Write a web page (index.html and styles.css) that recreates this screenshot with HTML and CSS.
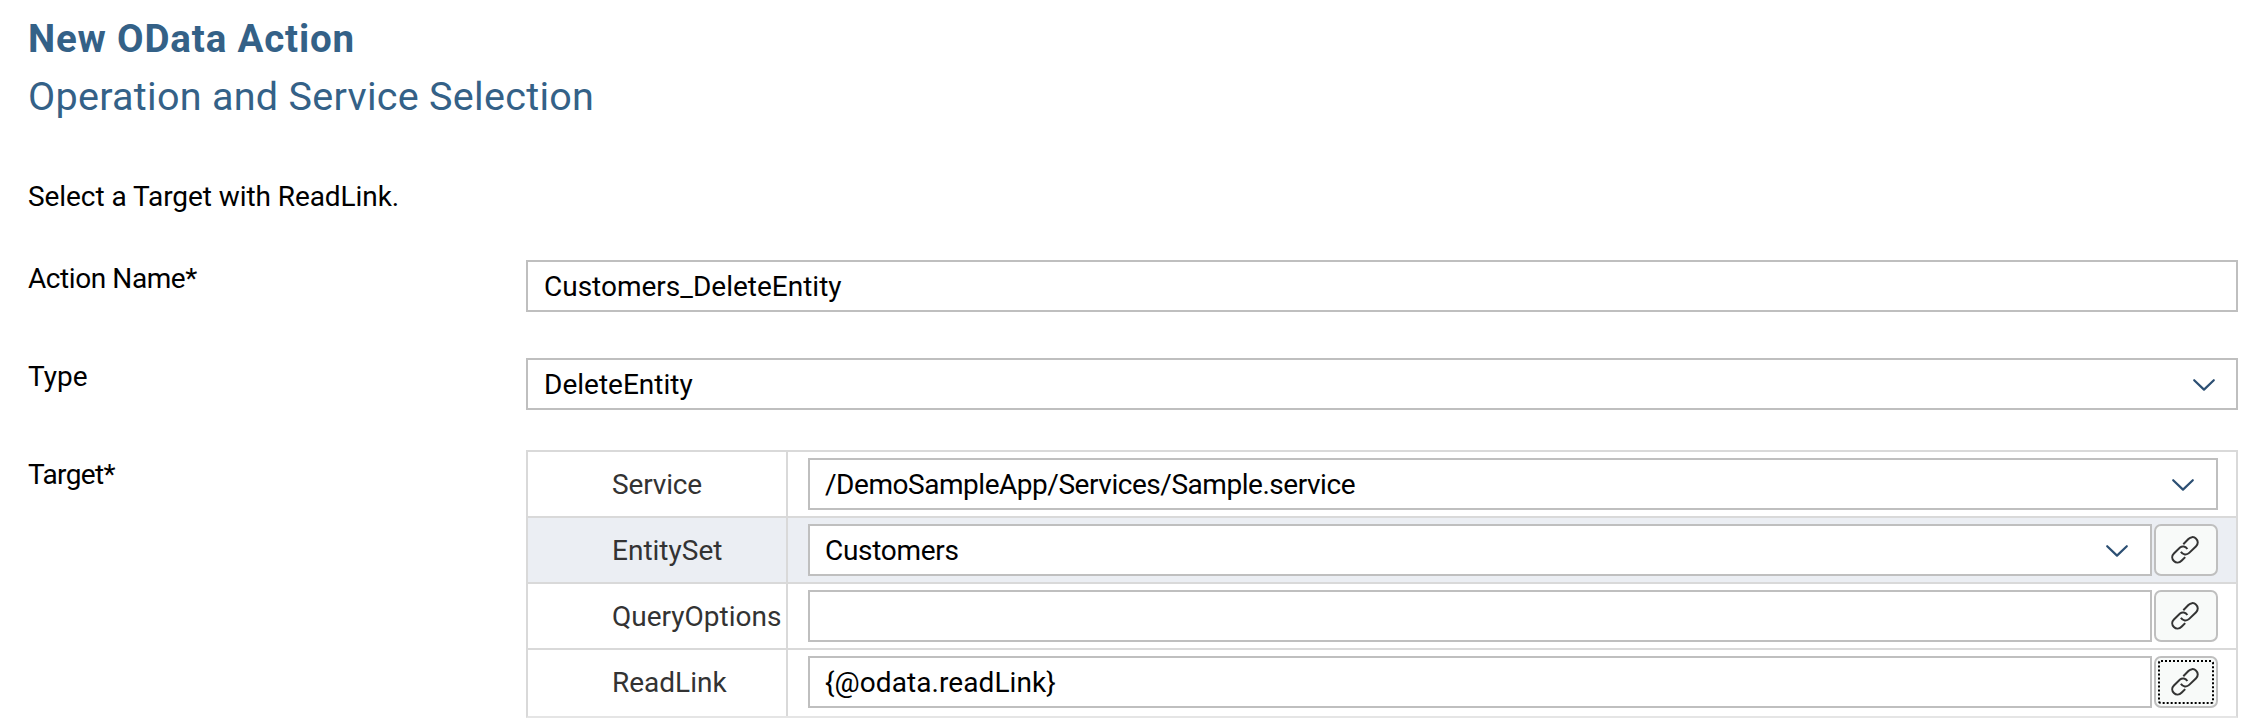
FILE: index.html
```html
<!DOCTYPE html>
<html lang="en">
<head>
<meta charset="utf-8">
<title>New OData Action</title>
<link rel="stylesheet" href="styles.css">
</head>
<body>
<svg width="0" height="0" class="defs">
  <symbol id="chevron" viewBox="0 0 24 14"><path d="M2.2 2.2 12 11.6 21.8 2.2"/></symbol>
  <symbol id="link" viewBox="0 0 28 28"><path d="M12.3 8.2 17.4 3C19.4 .9 22.7 .3 24.9 2.5C27.3 4.700 27.300 8 25.100 10.200L18.200 16.900C15.700 19.300 11.700 18.900 9.900 15.700M14.200 21.100 10.500 24.800C8.300 27 5.200 27.300 2.900 25C.600 22.700 .700 19.700 2.900 17.500L9 11.500C11.300 9.800 14.600 10.300 16.400 13"/></symbol>
</svg>
<main class="page">
  <h1 class="title">New OData Action</h1>
  <h2 class="subtitle">Operation and Service Selection</h2>
  <p class="hint">Select a Target with ReadLink.</p>
  <div class="row">
    <label class="label action">Action Name*</label>
    <div class="field"><span class="v-name">Customers_DeleteEntity</span></div>
  </div>
  <div class="row">
    <label class="label type">Type</label>
    <div class="field select"><span class="v-type">DeleteEntity</span><svg class="chevron"><use href="#chevron"/></svg></div>
  </div>
  <div class="row">
    <label class="label target">Target*</label>
    <div class="table">
      <div class="tr">
        <div class="th"><span class="k-service">Service</span></div>
        <div class="td"><div class="field select"><span class="v-service">/DemoSampleApp/Services/Sample.service</span><svg class="chevron"><use href="#chevron"/></svg></div></div>
      </div>
      <div class="tr selected">
        <div class="th"><span class="k-entity">EntitySet</span></div>
        <div class="td"><div class="field select"><span class="v-entity">Customers</span><svg class="chevron"><use href="#chevron"/></svg></div><button class="bind" aria-label="Bind"><svg class="link"><use href="#link"/></svg></button></div>
      </div>
      <div class="tr">
        <div class="th"><span class="k-query">QueryOptions</span></div>
        <div class="td"><div class="field"></div><button class="bind" aria-label="Bind"><svg class="link"><use href="#link"/></svg></button></div>
      </div>
      <div class="tr last">
        <div class="th"><span class="k-read">ReadLink</span></div>
        <div class="td"><div class="field"><span class="v-read">{@odata.readLink}</span></div><button class="bind focused" aria-label="Bind"><svg class="link"><use href="#link"/></svg></button></div>
      </div>
    </div>
  </div>
</main>
</body>
</html>
```
FILE: styles.css
```css
* { box-sizing: border-box; }
body { margin: 0; background: #fff; color: #000; font: 28px/36px Roboto, "Liberation Sans", sans-serif; }
.defs { display: block; }
.page { height: 720px; padding: 10px 10px 0 28px; overflow: hidden; }
.title, .subtitle { margin: 0; color: #346187; line-height: 58px; white-space: nowrap; }
.title { font-size: 38.500px; font-weight: 700; letter-spacing: .83px; }
.subtitle { font-size: 39.500px; font-weight: 400; letter-spacing: .29px; }
.hint { margin: 53px 0 45px; letter-spacing: -.07px; }
.row { display: grid; grid-template-columns: 498px 1fr; margin-bottom: 46px; }
.label { white-space: nowrap; padding-top: 1px; }
.action { letter-spacing: -.42px; }
.target { letter-spacing: -.65px; }
.field { flex: 1; display: flex; align-items: center; justify-content: space-between; height: 52px; border: 2px solid #bfbfbf; background: #fff; padding: 0 16px; white-space: nowrap; }
.field span { padding-top: 2px; }
.select { padding-right: 20px; }
.v-service { letter-spacing: -.46px; }
.v-entity { letter-spacing: -.3px; }
.v-read { letter-spacing: .08px; }
.k-service { letter-spacing: -.15px; }
.chevron { width: 24px; height: 14px; margin-top: 1px; fill: none; stroke: #2c4f73; stroke-width: 2.2; stroke-linecap: round; stroke-linejoin: round; }
.row:last-child { margin-top: -6px; }
.row:last-child .label { padding-top: 7px; }
.table { border: 2px solid #d9d9d9; border-bottom-color: #e5e5e5; height: 268px; }
.tr { display: grid; grid-template-columns: 260px 1fr; height: 66px; border-bottom: 2px solid #d9d9d9; }
.last { border-bottom: 0; }
.th { padding: 15px 0 0 84px; border-right: 2px solid #d9d9d9; color: #333; white-space: nowrap; }
.td { display: flex; gap: 2px; padding: 6px 18px 0 20px; }
.selected { background: #ebeef3; }
.tr .field { padding-left: 15px; }
.tr .select { padding-right: 21px; }
.bind { flex: none; width: 64px; height: 52px; display: grid; place-items: center; border: 2px solid #bfbfbf; border-radius: 7px; background: #f8faf9; padding: 0 2px 0 0; }
.focused { outline: 2px dotted #000; outline-offset: -6px; }
.link { width: 28px; height: 28px; fill: none; stroke: #333; stroke-width: 2; stroke-linecap: butt; }
```
